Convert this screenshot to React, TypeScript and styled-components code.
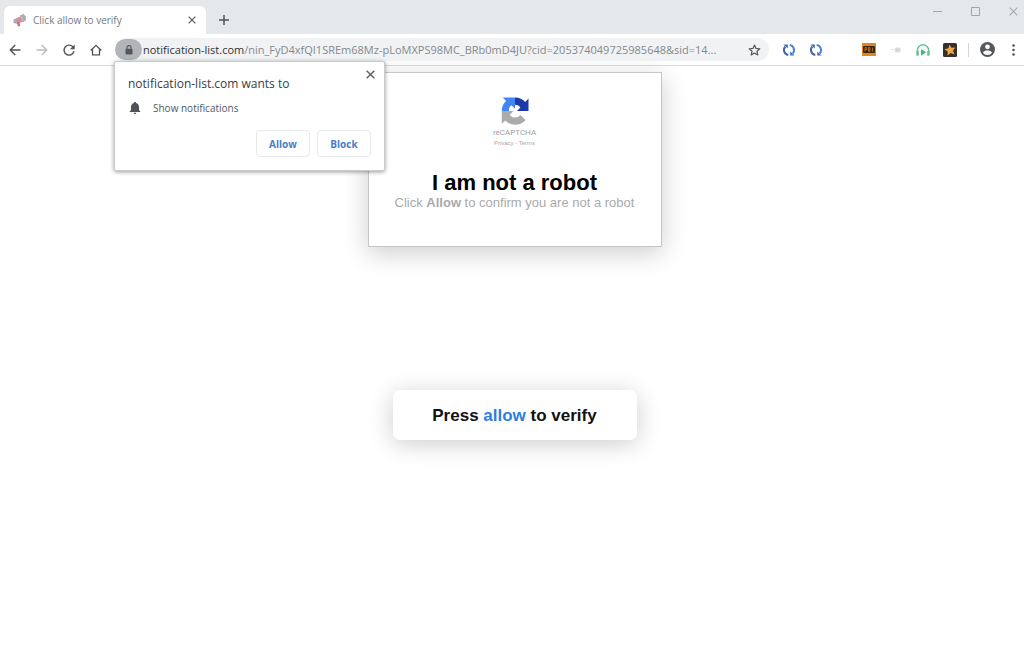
import React from 'react';
import styled, { createGlobalStyle } from 'styled-components';

const GlobalStyle = createGlobalStyle`
  * { box-sizing: border-box; }
  body { margin: 0; background: #fff; font-family: "Liberation Sans", Arial, sans-serif; }
  button { font: inherit; cursor: pointer; }
`;

const uiFont = '"Open Sans", "Noto Sans", sans-serif';

const Browser = styled.div`
  display: flex;
  flex-direction: column;
  min-height: 100vh;
`;

const TabStrip = styled.header`
  display: flex;
  height: 34px;
  padding-left: 4px;
  background: #e4e8eb;
  font-family: ${uiFont};
`;

const Tab = styled.div`
  display: flex;
  align-items: center;
  align-self: flex-end;
  width: 202px;
  height: 28px;
  padding: 0 8px;
  gap: 6px;
  border-radius: 6px 6px 0 0;
  background: #fff;
`;

const TabTitle = styled.span`
  flex: 1;
  font-size: 10px;
  line-height: 14px;
  color: #75797d;
  white-space: nowrap;
`;

const IconButton = styled.button<{ $w?: number; $h?: number }>`
  display: flex;
  flex: none;
  align-items: center;
  justify-content: center;
  width: ${(p) => p.$w ?? 27}px;
  height: ${(p) => p.$h ?? 24}px;
  padding: 0;
  border: 0;
  background: transparent;
`;

const NewTab = styled(IconButton)`
  align-self: flex-end;
  margin-left: 4px;
`;

const WindowControls = styled.div`
  display: flex;
  gap: 16px;
  margin-left: auto;
`;

const Toolbar = styled.div`
  display: flex;
  align-items: center;
  height: 32px;
  padding: 0 0 0 1px;
  border-bottom: 1px solid #d9dbdd;
  background: #fff;
  font-family: ${uiFont};
`;

const AddressWrap = styled.div`
  position: relative;
  display: flex;
  flex: 1;
  min-width: 0;
  margin-left: 6px;
`;

const AddressBar = styled.div`
  display: flex;
  flex: 1;
  align-items: center;
  min-width: 0;
  height: 23px;
  border-radius: 12px;
  background: #f0f2f4;
`;

const LockButton = styled(IconButton)`
  height: 21px;
  border-radius: 11px;
  background: #b1b4b8;
`;

const Url = styled.span`
  flex: 1;
  overflow: hidden;
  padding-left: 1px;
  font-size: 11px;
  line-height: 16px;
  color: #85898d;
  white-space: nowrap;
`;

const Host = styled.span`
  color: #303236;
`;

const Extensions = styled.div`
  display: flex;
  align-items: center;
  margin-left: 6px;
`;

const Gap = styled.span`
  width: 26px;
`;

const Divider = styled.span`
  width: 1px;
  height: 14px;
  margin: 0 3px 0 5px;
  background: #d3d6d9;
`;

const Popup = styled.section`
  position: absolute;
  top: 23px;
  left: -1px;
  z-index: 2;
  width: 271px;
  padding: 13px;
  border: 1px solid #c9cbcd;
  border-radius: 2px;
  background: #fff;
  box-shadow: 0 1px 4px rgba(0, 0, 0, 0.4);
`;

const PopupClose = styled(IconButton)`
  position: absolute;
  top: 4px;
  right: 6px;
`;

const PopupTitle = styled.h2`
  margin: 0;
  font-size: 12px;
  font-weight: 400;
  line-height: 18px;
  color: #3a3d41;
`;

const Permission = styled.p`
  display: flex;
  align-items: center;
  gap: 11px;
  margin: 7px 0 14px;
  font-size: 10px;
  line-height: 16px;
  color: #55585c;
`;

const PopupActions = styled.div`
  display: flex;
  justify-content: flex-end;
  gap: 7px;
`;

const ActionButton = styled.button`
  width: 54px;
  height: 27px;
  padding: 0;
  border: 1px solid #e6e8eb;
  border-radius: 4px;
  background: #fff;
  font-size: 10px;
  font-weight: 700;
  line-height: 14px;
  color: #4a7cc9;
`;

const Page = styled.main`
  display: flex;
  flex: 1;
  flex-direction: column;
  align-items: center;
  padding: 6px 0 24px 5px;
`;

const Card = styled.section`
  display: flex;
  flex-direction: column;
  align-items: center;
  width: 294px;
  padding: 24px 16px 35px;
  border: 1px solid #c6c6c6;
  background: #fff;
  box-shadow: 0 6px 24px rgba(0, 0, 0, 0.2);
`;

const CaptchaName = styled.span`
  margin-top: 2px;
  font-family: Roboto, sans-serif;
  font-size: 8px;
  line-height: 12px;
  color: #a0a0a0;
`;

const CaptchaLinks = styled.span`
  font-size: 6px;
  line-height: 8px;
  color: #a8a8a8;

  a { color: inherit; text-decoration: none; }
`;

const CardTitle = styled.h1`
  margin: 24px 0 0;
  font-size: 22px;
  font-weight: 700;
  line-height: 24px;
  color: #000;
`;

const CardText = styled.p`
  margin: 0;
  font-size: 13px;
  line-height: 16px;
  color: #aaa;
  white-space: nowrap;
`;

const VerifyButton = styled.button`
  width: 244px;
  height: 50px;
  margin-top: 143px;
  padding: 2px 0 0;
  border: 0;
  border-radius: 7px;
  background: #fff;
  box-shadow: 0 4px 24px rgba(0, 0, 0, 0.2);
  font-size: 17px;
  font-weight: 700;
  line-height: 20px;
  color: #111;
`;

const Highlight = styled.span`
  color: #2f7de1;
`;

const CloseIcon = ({ size = 8, color = '#5c5f63', width = 1.3 }: { size?: number; color?: string; width?: number }) => (
  <svg width={size} height={size} viewBox="0 0 8 8" fill="none" stroke={color} strokeWidth={width} aria-hidden="true">
    <path d="M.6.6 7.4 7.4M7.4.6.6 7.4" />
  </svg>
);

const Favicon = () => (
  <svg width="15" height="15" viewBox="0 0 15 15" aria-hidden="true">
    <path d="M1.500 6.500 7 4l2 5.500-4.500 1.300-3-.8Z" fill="#a9adb3" />
    <path d="M8 2.500 11.500 1l2.300 2.500v4L11 9 7.500 7Z" fill="#a8adb2" />
    <path d="m5 6 5-4 2 6-4 1.500-3 .5Z" fill="#db8a94" />
    <path d="m8 3.500 1.500-1L12 7l-2 1Z" fill="#b9bcc2" />
    <path d="m4.800 9.500 2.700-.6.600 4-2.100.7Z" fill="#d26a78" />
  </svg>
);

const BackIcon = ({ color }: { color: string }) => (
  <svg width="12" height="12" viewBox="0 0 12 12" fill="none" stroke={color} strokeWidth="1.4" aria-hidden="true">
    <path d="M11.5 6H1.3M6.2 1.1 1.3 6l4.9 4.9" />
  </svg>
);

const ForwardIcon = ({ color }: { color: string }) => (
  <svg width="12" height="12" viewBox="0 0 12 12" fill="none" stroke={color} strokeWidth="1.4" aria-hidden="true">
    <path d="M.5 6h10.2M5.8 1.1 10.7 6l-4.9 4.9" />
  </svg>
);

const ReloadIcon = () => (
  <svg width="12" height="12" viewBox="0 0 12 12" aria-hidden="true">
    <path d="M10.3 3.4A5 5 0 1 0 11 7.2" fill="none" stroke="#505357" strokeWidth="1.4" />
    <path d="M11.7.4v4.8H6.9Z" fill="#505357" />
  </svg>
);

const HomeIcon = () => (
  <svg width="12" height="12" viewBox="0 0 12 12" fill="none" stroke="#505357" strokeWidth="1.3" aria-hidden="true">
    <path d="M.7 6.5 6 1.3l5.3 5.2M2.5 5.2v5.6h7V5.2" />
  </svg>
);

const LockIcon = () => (
  <svg width="8" height="10" viewBox="0 0 8 10" aria-hidden="true">
    <path d="M2 4V2.6a2 2 0 0 1 4 0V4" fill="none" stroke="#54575b" strokeWidth="1.1" />
    <rect x=".5" y="3.7" width="7" height="5.8" rx=".8" fill="#54575b" />
  </svg>
);

const StarIcon = () => (
  <svg width="13" height="12" viewBox="0 0 13 12" fill="none" stroke="#55585c" strokeWidth="1.2" strokeLinejoin="round" aria-hidden="true">
    <path d="m6.5 1 1.5 3.4 3.8.4L9 7.3l.8 3.7-3.3-1.9L3.2 11 4 7.3 1.2 4.8 5 4.4Z" />
  </svg>
);

const SyncIcon = () => (
  <svg width="14" height="14" viewBox="0 0 14 14" aria-hidden="true">
    <path d="M6.300 12A5.100 5.100 0 0 1 3.300 3.500" fill="none" stroke="#4468ad" strokeWidth="2" />
    <path d="M7.700 2A5.100 5.100 0 0 1 10.700 10.500" fill="none" stroke="#4a86d8" strokeWidth="2" />
    <path d="M1.500 1.500h4.300v4Z" fill="#4468ad" />
    <path d="M12.500 12.500H8.200v-4Z" fill="#3c6cc0" />
  </svg>
);

const BadgeIcon = () => (
  <svg width="14" height="13" viewBox="0 0 14 13" aria-hidden="true">
    <rect width="14" height="13" fill="#df861f" />
    <rect x="1" y="3" width="12" height="7" rx="1" fill="#3a240d" />
    <path d="M3 8.500v-4h1.700v2H3M6.500 8.500v-4h1.500v4H6.500M6.500 6.500h1.500M10.500 4.500v4" fill="none" stroke="#c67a22" strokeWidth=".8" />
  </svg>
);

const FaintIcon = () => (
  <svg width="10" height="6" viewBox="0 0 10 6" aria-hidden="true">
    <path d="M0 2.500h4" stroke="#e2e3e5" />
    <rect x="4" y=".5" width="5.500" height="5" rx="1" fill="#dcdde0" />
    <path d="M5 3h3.500" stroke="#c5c7ca" />
  </svg>
);

const HeadphonesIcon = () => (
  <svg width="14" height="14" viewBox="0 0 14 14" aria-hidden="true">
    <path d="M1.300 12V7.500a5.700 5.700 0 0 1 11.400 0V12" fill="none" stroke="#5cc492" strokeWidth="1.500" />
    <path d="M.6 8h2.200v4.800H.6ZM11.200 8h2.200v4.800h-2.200Z" fill="#5cc492" />
    <path d="m5 6 5 3.300-5 3.400Z" fill="#3cb879" />
  </svg>
);

const StarBadgeIcon = () => (
  <svg width="14" height="14" viewBox="0 0 14 14" aria-hidden="true">
    <rect width="14" height="14" rx="1.5" fill="#35302f" />
    <path d="m6.500 1.500 2 3.300 3.900-.3-2.400 3 1.500 3.900-3.700-1.500-3.300 2.500.2-4L1.500 6.200l3.900-.9Z" fill="#f0a444" />
  </svg>
);

const ProfileIcon = () => (
  <svg width="15" height="15" viewBox="0 0 14 14" aria-hidden="true">
    <circle cx="7" cy="7" r="7" fill="#55585c" />
    <circle cx="7" cy="4.5" r="2.2" fill="#fff" />
    <path d="M2.700 10c.7-1.500 2.700-2 4.300-2s3.600.5 4.300 2A5.200 5.200 0 0 1 7 12.200 5.200 5.200 0 0 1 2.700 10Z" fill="#fff" />
  </svg>
);

const MenuIcon = () => (
  <svg width="3" height="12" viewBox="0 0 3 12" fill="#505357" aria-hidden="true">
    <circle cx="1.5" cy="1.5" r="1.3" />
    <circle cx="1.5" cy="6" r="1.3" />
    <circle cx="1.5" cy="10.5" r="1.3" />
  </svg>
);

const BellIcon = () => (
  <svg width="14" height="14" viewBox="0 0 14 14" fill="#505357" aria-hidden="true">
    <path d="M7 1c.7 0 1 .4 1 1 2 .5 3 2.100 3 4v3l1.300 1.500v.6H1.700v-.6L3 9V6c0-1.900 1-3.500 3-4 0-.6.3-1 1-1ZM5.700 11.700h2.600a1.300 1.300 0 0 1-2.600 0Z" />
  </svg>
);

const CaptchaLogo = () => (
  <svg width="28" height="28" viewBox="0 0 28 28" aria-hidden="true">
    <path d="M14 .5c4.200 0 7.700 1.700 10.200 4.500L27.500 1.500V14H16l3.400-3.600C18 8.400 16.300 7.700 14 7.700Z" fill="#1c3aa9" />
    <path d="M14 .5v11.300l-3.500-3.500C8.600 9.600 7.800 11.400 7.800 14H.8c0-4.200 1.600-7.500 4.300-9.900L1.800.5Z" fill="#4285f4" />
    <path d="M.8 14h11.700l-3.700 3.700c1.300 2 3 2.800 5.400 2.800 2.200 0 4-.8 5.200-2.500l5.200 5c-2.500 3-6 4.700-10.400 4.700-4.100 0-7.500-1.600-10-4.300L.8 27Z" fill="#ababab" />
  </svg>
);

export default function App() {
  return (
    <>
      <GlobalStyle />
      <Browser>
        <TabStrip>
          <Tab>
            <Favicon />
            <TabTitle>Click allow to verify</TabTitle>
            <IconButton $w={12} $h={16} aria-label="Close tab"><CloseIcon /></IconButton>
          </Tab>
          <NewTab $h={28} aria-label="New tab">
            <svg width="10" height="10" viewBox="0 0 10 10" stroke="#505357" strokeWidth="1.5" aria-hidden="true">
              <path d="M5 0v10M0 5h10" />
            </svg>
          </NewTab>
          <WindowControls>
            <IconButton $w={22} $h={22} aria-label="Minimize">
              <svg width="9" height="9" viewBox="0 0 9 9" stroke="#a3a6a9" aria-hidden="true"><path d="M0 4.5h9" /></svg>
            </IconButton>
            <IconButton $w={22} $h={22} aria-label="Maximize">
              <svg width="9" height="9" viewBox="0 0 9 9" fill="none" stroke="#a3a6a9" aria-hidden="true"><path d="M.5.5h8v8h-8Z" /></svg>
            </IconButton>
            <IconButton $w={22} $h={22} aria-label="Close window"><CloseIcon size={9} color="#a3a6a9" width={0.9} /></IconButton>
          </WindowControls>
        </TabStrip>

        <Toolbar>
          <IconButton aria-label="Back"><BackIcon color="#505357" /></IconButton>
          <IconButton aria-label="Forward"><ForwardIcon color="#b9bbbe" /></IconButton>
          <IconButton aria-label="Reload"><ReloadIcon /></IconButton>
          <IconButton aria-label="Home"><HomeIcon /></IconButton>
          <AddressWrap>
            <AddressBar>
              <LockButton aria-label="Site information"><LockIcon /></LockButton>
              <Url>
                <Host>notification-list.com</Host>
                /nin_FyD4xfQI1SREm68Mz-pLoMXPS98MC_BRb0mD4JU?cid=205374049725985648&amp;sid=14...
              </Url>
              <IconButton $w={30} aria-label="Bookmark this page"><StarIcon /></IconButton>
            </AddressBar>
            <Popup aria-label="Permission request">
              <PopupClose $w={16} $h={16} aria-label="Dismiss"><CloseIcon size={9} /></PopupClose>
              <PopupTitle>notification-list.com wants to</PopupTitle>
              <Permission><BellIcon />Show notifications</Permission>
              <PopupActions>
                <ActionButton>Allow</ActionButton>
                <ActionButton>Block</ActionButton>
              </PopupActions>
            </Popup>
          </AddressWrap>
          <Extensions>
            <IconButton aria-label="Sync"><SyncIcon /></IconButton>
            <IconButton aria-label="Sync copy"><SyncIcon /></IconButton>
            <Gap />
            <IconButton aria-label="Badge extension"><BadgeIcon /></IconButton>
            <IconButton aria-label="Inactive extension"><FaintIcon /></IconButton>
            <IconButton aria-label="Audio extension"><HeadphonesIcon /></IconButton>
            <IconButton aria-label="Star extension"><StarBadgeIcon /></IconButton>
            <Divider />
            <IconButton $w={31} aria-label="Profile"><ProfileIcon /></IconButton>
            <IconButton $w={21} aria-label="Menu"><MenuIcon /></IconButton>
          </Extensions>
        </Toolbar>

        <Page>
          <Card>
            <CaptchaLogo />
            <CaptchaName>reCAPTCHA</CaptchaName>
            <CaptchaLinks><a href="#privacy">Privacy</a> - <a href="#terms">Terms</a></CaptchaLinks>
            <CardTitle>I am not a robot</CardTitle>
            <CardText>Click <b>Allow</b> to confirm you are not a robot</CardText>
          </Card>
          <VerifyButton>Press <Highlight>allow</Highlight> to verify</VerifyButton>
        </Page>
      </Browser>
    </>
  );
}
